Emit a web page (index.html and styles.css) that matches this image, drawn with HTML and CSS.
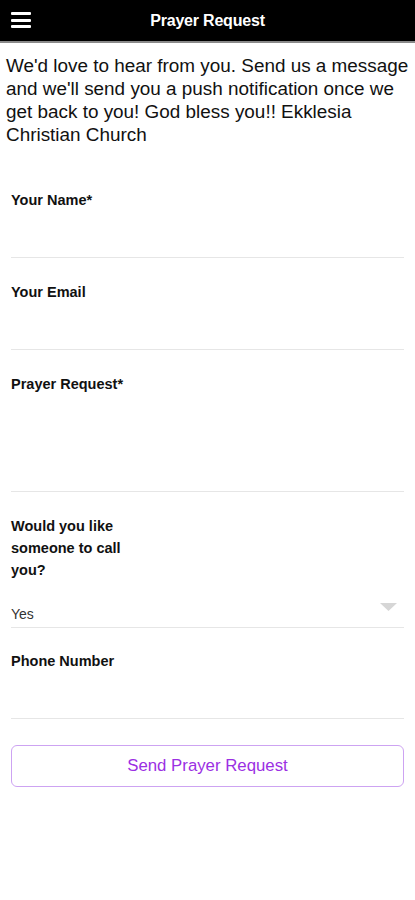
FILE: index.html
```html
<!DOCTYPE html>
<html lang="en">
<head>
  <meta charset="utf-8" />
  <meta name="viewport" content="width=device-width,initial-scale=1" />
  <title>Prayer Request</title>
  <link rel="stylesheet" href="styles.css">
</head>
<body>
  <header class="topbar">
    <button class="menu-btn" aria-label="Menu">
      <span></span><span></span><span></span>
    </button>
    <h1>Prayer Request</h1>
  </header>

  <p class="intro">We'd love to hear from you. Send us a message and we'll send you a push notification once we get back to you! God bless you!! Ekklesia Christian Church</p>

  <form class="form">
    <div class="field">
      <label>Your Name*</label>
      <input type="text" />
    </div>
    <div class="field">
      <label>Your Email</label>
      <input type="email" />
    </div>
    <div class="field field-tall">
      <label>Prayer Request*</label>
      <textarea></textarea>
    </div>
    <div class="field field-select">
      <label class="narrow">Would you like someone to call you?</label>
      <div class="select">
        <span>Yes</span>
        <svg width="17" height="8" viewBox="0 0 17 8"><path d="M0 0h17L8.5 8z" fill="#d6d6d6"/></svg>
      </div>
    </div>
    <div class="field">
      <label>Phone Number</label>
      <input type="tel" />
    </div>
    <button type="button" class="send-btn">Send Prayer Request</button>
  </form>
</body>
</html>
```

FILE: styles.css
```css
:root{
  --line:#e6e6e6;
  --purple:#9b30e3;
  --purple-border:#cda3f2;
}

html,body{height:100%}
body{
  margin:0; background:#fff; color:#111;
  font-family:"Liberation Sans",Arial,Helvetica,sans-serif;
  overflow-x:hidden;
}

.topbar{
  height:41px; background:#000; color:#fff;
  border-bottom:2px solid #8a8a8a;
  display:flex; align-items:center; justify-content:center;
  position:relative;
}
.topbar h1{ margin:0; font-size:16px; font-weight:700; letter-spacing:-0.2px; }

.menu-btn{
  position:absolute; left:11px; top:12px;
  width:20px; height:16px; padding:0; border:0; background:none;
  display:flex; flex-direction:column; justify-content:space-between;
}
.menu-btn span{ display:block; height:3px; background:#fff; border-radius:1px; }

.intro{
  margin:11px 0 0 6px;
  font-size:18.9px; line-height:23px; color:#111;
  width:412px;
}

.form{ padding:46px 11px 0 11px; }

.field{
  display:flex; flex-direction:column;
  height:65px; margin-bottom:26px;
  border-bottom:1px solid var(--line);
}
.field label{ font-size:14.5px; font-weight:700; line-height:16px; color:#111; }
.field input, .field textarea{ border:0; outline:0; background:none; flex:1; font:inherit; resize:none; }

.field-tall{ height:115px; margin-bottom:23px; }

.field-select{ height:auto; margin-bottom:25px; }
.field-select label.narrow{ width:130px; line-height:22px; }
.select{
  display:flex; justify-content:space-between; align-items:flex-end;
  height:46px; padding-bottom:5px; box-sizing:border-box;
  font-size:14px; line-height:16px; color:#333;
}
.select svg{ margin:0 7px 11px 0; }

.send-btn{
  display:block; width:100%; height:42px; margin-top:0;
  border:1.5px solid var(--purple-border); border-radius:6px; background:#fff;
  color:var(--purple); font-family:inherit; font-size:16.8px;
}
```
